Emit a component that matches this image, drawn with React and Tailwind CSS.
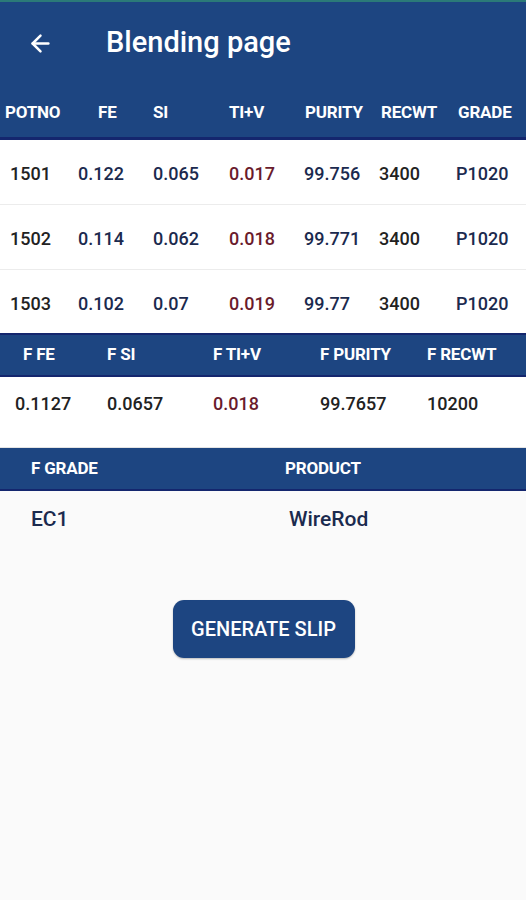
import { ArrowLeft } from "lucide-react";

const headCols = [
  { label: "POTNO", w: "w-[93px]" },
  { label: "FE", w: "w-[55px]" },
  { label: "SI", w: "w-[76px]" },
  { label: "TI+V", w: "w-[76px]" },
  { label: "PURITY", w: "w-[76px]" },
  { label: "RECWT", w: "w-[77px]" },
  { label: "GRADE", w: "flex-1" },
];

const pots = [
  ["1501", "0.122", "0.065", "0.017", "99.756", "3400", "P1020"],
  ["1502", "0.114", "0.062", "0.018", "99.771", "3400", "P1020"],
  ["1503", "0.102", "0.07", "0.019", "99.77", "3400", "P1020"],
];

const cellW = ["w-[68px]", "w-[75px]", "w-[76px]", "w-[75px]", "w-[75px]", "w-[77px]", "flex-1"];
const cellColor = [
  "text-[#222222]",
  "text-[#1b2a4e]",
  "text-[#1b2a4e]",
  "text-[#6a1b2c]",
  "text-[#1b2a4e]",
  "text-[#222222]",
  "text-[#1b2a4e]",
];

const finalHead = ["F FE", "F SI", "F TI+V", "F PURITY", "F RECWT"];
const finalHeadW = ["w-[84px]", "w-[106px]", "w-[107px]", "w-[107px]", "flex-1"];
const finalVals = ["0.1127", "0.0657", "0.018", "99.7657", "10200"];
const finalValW = ["w-[92px]", "w-[106px]", "w-[107px]", "w-[107px]", "flex-1"];
const finalColor = ["text-[#222222]", "text-[#222222]", "text-[#6a1b2c]", "text-[#222222]", "text-[#222222]"];

export default function App() {
  return (
    <div className="min-h-[900px] bg-[#fafafa] font-['Roboto',sans-serif]">
      <div className="h-[2px] bg-[#2b7a78]" />
      <header className="bg-[#1d4581] border-b-[3px] border-[#14266e]">
        <div className="flex items-center h-[82px]">
          <ArrowLeft className="ml-[27px] text-white" size={27} strokeWidth={2.2} />
          <h1 className="ml-[52px] text-[29px] font-medium text-white">Blending page</h1>
        </div>
        <div className="flex items-center h-[53px] pl-[5px] pt-[4px] text-white text-[17px] font-bold tracking-[-0.2px]">
          {headCols.map((c) => (
            <div key={c.label} className={c.w}>
              {c.label}
            </div>
          ))}
        </div>
      </header>

      <div className="bg-white">
        {pots.map((row, i) => (
          <div
            key={row[0]}
            className={`flex items-center pl-[10px] pt-[3px] text-[18px] font-medium ${
              i < pots.length - 1 ? "h-[65px] border-b border-[#ececec]" : "h-[63px]"
            }`}
          >
            {row.map((v, j) => (
              <div key={j} className={`${cellW[j]} ${cellColor[j]}`}>
                {v}
              </div>
            ))}
          </div>
        ))}
      </div>

      <div className="flex items-center h-[44px] pl-[23px] bg-[#1d4581] border-y-2 border-[#14266e] text-white text-[17px] font-bold tracking-[-0.2px]">
        {finalHead.map((h, i) => (
          <div key={h} className={finalHeadW[i]}>
            {h}
          </div>
        ))}
      </div>
      <div className="flex items-center h-[53px] pl-[15px] bg-white text-[18px] font-medium">
        {finalVals.map((v, i) => (
          <div key={i} className={`${finalValW[i]} ${finalColor[i]}`}>
            {v}
          </div>
        ))}
      </div>
      <div className="h-[18px] bg-white border-b border-[#e4e4e4]" />

      <div className="flex items-center h-[43px] bg-[#1d4581] border-b-2 border-[#14266e] text-white text-[17px] font-bold tracking-[-0.2px]">
        <div className="w-[285px] pl-[31px]">F GRADE</div>
        <div>PRODUCT</div>
      </div>
      <div className="flex items-center h-[56px] pt-[2px] text-[#1b2a4e] text-[21px] font-medium">
        <div className="w-[289px] pl-[31px]">EC1</div>
        <div>WireRod</div>
      </div>

      <div className="flex justify-center pt-[53px] pl-[1px]">
        <button className="w-[182px] h-[58px] rounded-[11px] bg-[#1d4581] text-white text-[20px] font-medium shadow-[0_1px_2px_rgba(0,0,0,0.25)]">
          GENERATE SLIP
        </button>
      </div>
    </div>
  );
}
